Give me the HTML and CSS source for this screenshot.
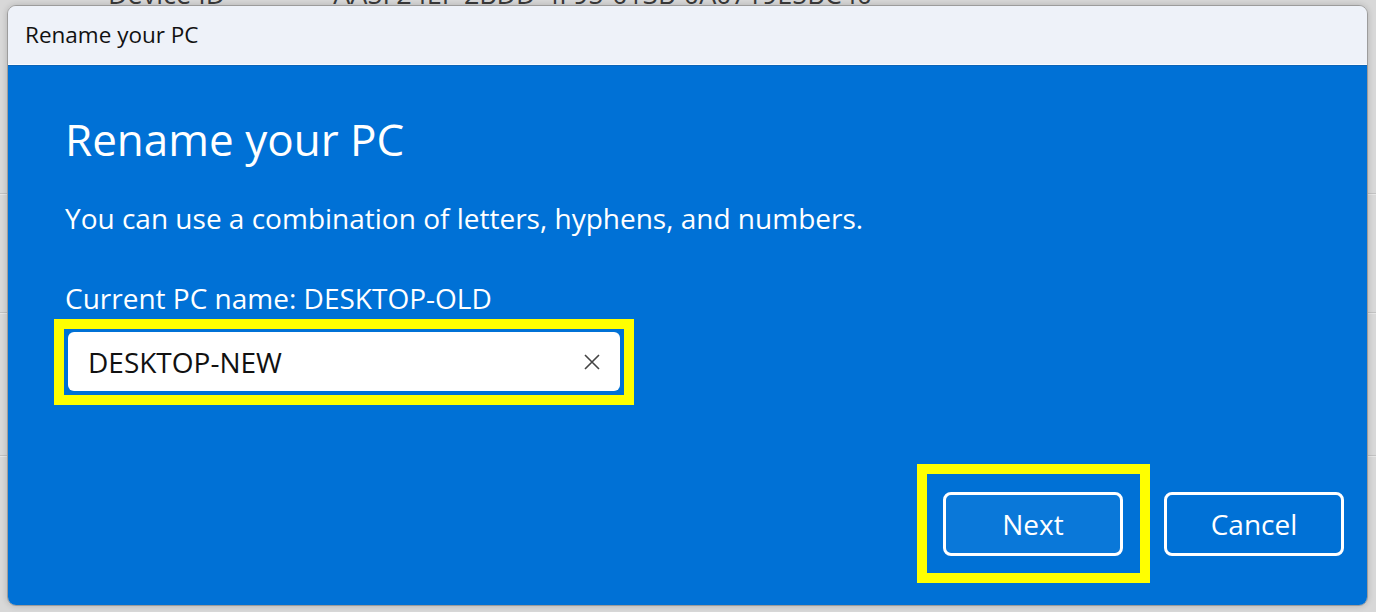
FILE: index.html
```html
<!DOCTYPE html>
<html lang="en">
<head>
    <meta charset="UTF-8">
    <title>Rename your PC</title>
    <link rel="stylesheet" href="styles.css">
</head>
<body>
    <!-- settings page behind the dialog -->
    <div class="page">
        <div class="settings-row first">
            <span class="row-label">Device ID</span>
            <span class="row-value">AA5F24EF-2BDD-4F95-013B-0A0719E5BC40</span>
        </div>
        <div class="settings-row mid"></div>
        <div class="settings-row low"></div>
    </div>

    <!-- rename dialog -->
    <div class="dialog">
        <div class="titlebar">Rename your PC</div>
        <div class="dialog-body">
            <h1>Rename your PC</h1>
            <p class="hint">You can use a combination of letters, hyphens, and numbers.</p>
            <div class="field-label">Current PC name: DESKTOP-OLD</div>
            <div class="highlight field-highlight">
                <div class="textbox">
                    <input type="text" value="DESKTOP-NEW">
                    <span class="clear-btn">
                        <svg width="18" height="18" viewBox="0 0 18 18">
                            <path d="M2 2 L16 16 M16 2 L2 16" stroke="#444" stroke-width="1.6" fill="none"/>
                        </svg>
                    </span>
                </div>
            </div>
            <div class="actions">
                <div class="highlight btn-highlight">
                    <button class="btn btn-primary">Next</button>
                </div>
                <button class="btn">Cancel</button>
            </div>
        </div>
    </div>
</body>
</html>
```

FILE: styles.css
```css
* {
    box-sizing: border-box;
    margin: 0;
    padding: 0;
}

html, body {
    height: 100%;
}

body {
    font-family: "Open Sans", "Noto Sans", sans-serif;
    background-color: #d8d8d8;
    overflow: hidden;
    position: relative;
}

/* background page */
.page {
    color: #3a3a3a;
}

.settings-row {
    border-bottom: 1px solid #c2c2c2;
    box-shadow: 0 1px 0 #e6e6e6;
}

.settings-row.first {
    display: flex;
    height: 218px;
    margin-top: -24px;
    padding-left: 108px;
    font-size: 27px;
    line-height: 36px;
}

.row-value {
    margin-left: 108px;
    letter-spacing: -0.15px;
}

.settings-row.mid {
    height: 119px;
}

.settings-row.low {
    height: 143px;
}

/* dialog */
.dialog {
    position: absolute;
    top: 5px;
    left: 7px;
    width: 1361px;
    height: 601px;
    border: 1px solid #9c9c9c;
    border-radius: 9px;
    overflow: hidden;
    display: flex;
    flex-direction: column;
    box-shadow: 0 0 6px rgba(0,0,0,0.18);
}

.titlebar {
    height: 59px;
    background-color: #eef2f9;
    border-bottom: 1px solid #fbfcfe;
    padding-left: 17px;
    font-size: 22.5px;
    line-height: 58px;
    color: #111;
}

.dialog-body {
    flex: 1;
    background-color: #0071d6;
    border-top: 1px solid #0a64b8;
    color: #fff;
    padding: 0 23px 22px 57px;
    display: flex;
    flex-direction: column;
}

h1 {
    font-size: 44px;
    font-weight: 400;
    line-height: 60px;
    margin-top: 43px;
}

.hint {
    font-size: 28px;
    line-height: 36px;
    margin-top: 31px;
}

.field-label {
    font-size: 28px;
    line-height: 36px;
    margin-top: 44px;
}

.highlight {
    border: 10px solid #ffff00;
}

.field-highlight {
    align-self: flex-start;
    margin-left: -11px;
    margin-top: 3px;
    padding: 3px 4px 4px 4px;
}

.textbox {
    width: 552px;
    height: 59px;
    background-color: #fff;
    border-radius: 6px;
    display: flex;
    align-items: center;
    padding: 0 19px 0 20px;
}

.textbox input {
    flex: 1;
    border: none;
    outline: none;
    background: transparent;
    font-family: inherit;
    font-size: 28px;
    color: #111;
}

.clear-btn {
    display: flex;
}

.actions {
    margin-top: auto;
    display: flex;
    justify-content: flex-end;
    align-items: center;
    gap: 14px;
}

.btn-highlight {
    padding: 18px 17px 17px 16px;
}

.btn {
    width: 180px;
    height: 64px;
    border: 3px solid #fff;
    border-radius: 8px;
    background-color: #0071d6;
    color: #fff;
    font-family: inherit;
    font-size: 28px;
}

.btn-primary {
    background-color: #0a78d9;
}
```
